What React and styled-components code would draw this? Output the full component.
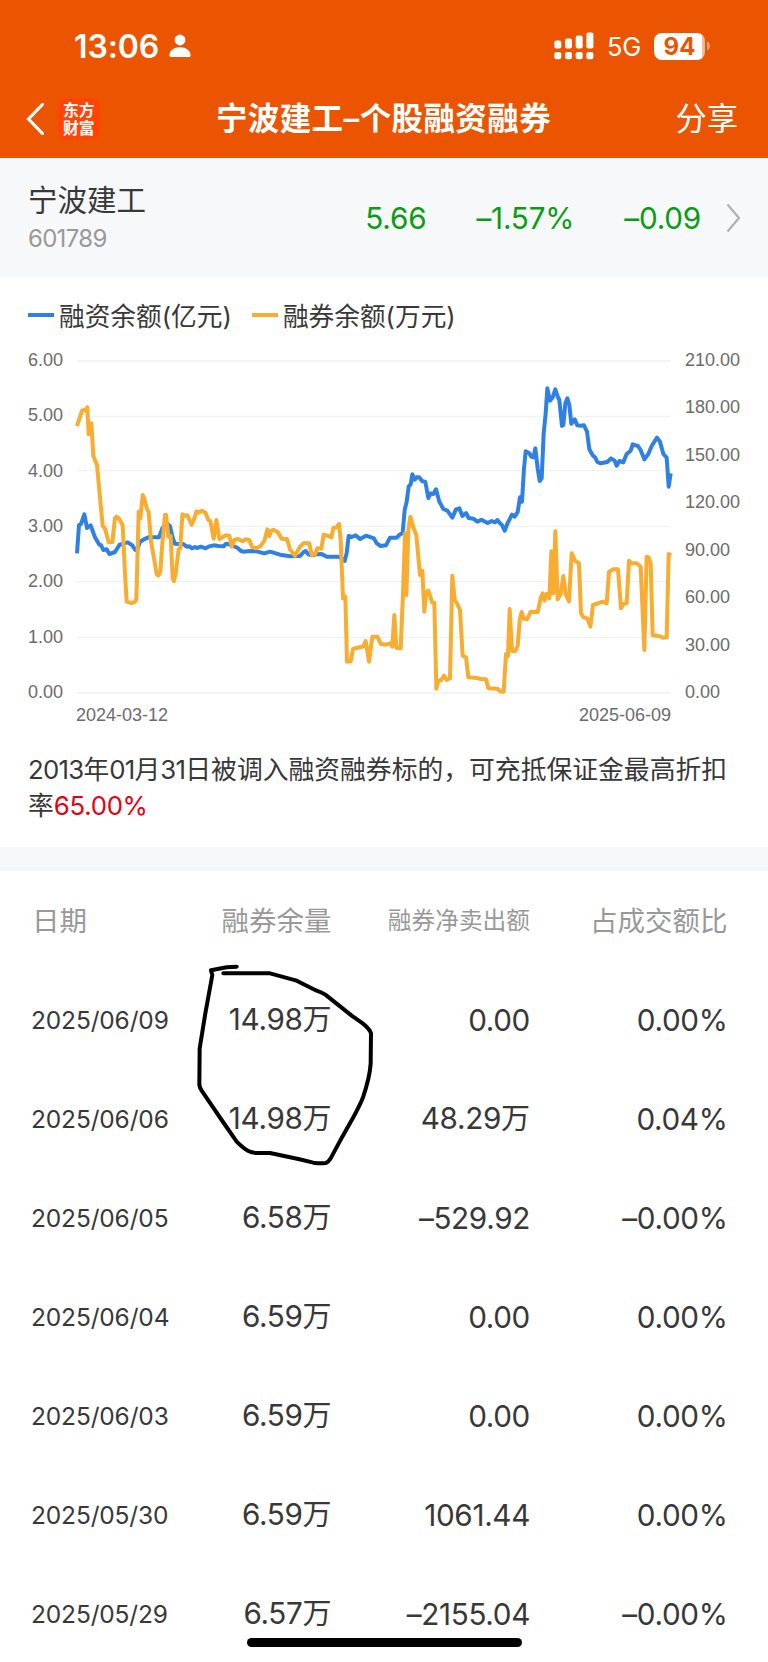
import React from "react";
import styled, { createGlobalStyle } from "styled-components";

const GlobalStyle = createGlobalStyle`
  * { box-sizing: border-box; }
  body {
    margin: 0;
    background: #fff;
    font-family: Inter, "Noto Sans CJK SC", sans-serif;
    color: #383838;
    font-weight: 400;
  }
`;

const Screen = styled.div`
  position: relative;
  width: 768px;
  height: 1662px;
  overflow: hidden;
  background: #fff;
`;

const Top = styled.header`
  height: 158px;
  background: #eb5502;
  color: #fff;
`;

const StatusBar = styled.div`
  display: flex;
  align-items: center;
  height: 92px;
  padding: 0 57px 0 74px;
`;

const Clock = styled.span`
  font-size: 32px;
  font-weight: 600;
  line-height: 40px;
  letter-spacing: -0.1px;
  margin-top: 1px;
  margin-right: 10px;
`;

const StatusRight = styled.div`
  display: flex;
  align-items: center;
  margin-left: auto;
`;

const Network = styled.span`
  font-size: 25.5px;
  line-height: 32px;
  margin: 2px 13px 0 13px;
  letter-spacing: -0.3px;
`;

const Battery = styled.span`
  display: flex;
  align-items: center;
  justify-content: center;
  width: 51px;
  height: 27px;
  border-radius: 8px;
  background: linear-gradient(90deg, #fff 48px, #f8bb9a 48px);
  color: #eb5502;
  font-size: 24px;
  font-weight: 700;
  line-height: 27px;
`;

const NavBar = styled.nav`
  display: grid;
  grid-template-columns: 184px 1fr 184px;
  align-items: center;
  height: 54px;
  padding: 0 30px 0 26px;
`;

const NavLeft = styled.div`
  display: flex;
  align-items: center;
  gap: 14px;
`;

const AppLogo = styled.div`
  width: 42px;
  height: 42px;
  padding: 3px 5px;
  border-radius: 9px;
  background: #ff4405;
  font-family: "Noto Sans CJK SC", sans-serif;
  font-size: 15.8px;
  font-weight: 700;
  line-height: 18px;
  word-break: break-all;
`;

const Title = styled.h1`
  margin: 0;
  padding-left: 3px;
  font-size: 31.5px;
  font-weight: 600;
  line-height: 40px;
  letter-spacing: 0.4px;
  white-space: nowrap;
  text-align: center;
`;

const Share = styled.span`
  font-size: 31.3px;
  line-height: 40px;
  text-align: right;
`;

const Quote = styled.section`
  display: flex;
  align-items: center;
  height: 119px;
  padding: 0 27px 0 28px;
  background: #f6f8fa;
`;

const StockName = styled.div`
  font-size: 29.5px;
  line-height: 36px;
`;

const StockCode = styled.div`
  margin-top: 6px;
  font-size: 24px;
  line-height: 30px;
  color: #999;
  letter-spacing: -0.7px;
`;

const Figures = styled.div`
  display: flex;
  gap: 50px;
  margin-left: auto;
  margin-right: 25px;
  font-size: 29.7px;
  line-height: 36px;
  color: #0a9c12;
  letter-spacing: -0.2px;
`;

const ChartCard = styled.section`
  height: 453px;
  padding-top: 20px;
`;

const Legend = styled.div`
  display: flex;
  align-items: center;
  height: 34px;
  padding-left: 28px;
  gap: 20px;
  font-size: 25.7px;
`;

const LegendItem = styled.span`
  display: flex;
  align-items: center;
  gap: 5px;
  white-space: nowrap;
  &::before {
    content: "";
    width: 26px;
    height: 4px;
    margin-top: 2px;
    background: ${(p) => p.$color};
  }
`;

const ChartBody = styled.div`
  display: grid;
  grid-template-columns: 42px 606px 1fr;
  padding: 19px 0 0 28px;
  font-family: "Liberation Sans", Arial, sans-serif;
  font-size: 18px;
  line-height: 20px;
  color: #6b6b6b;
`;

const Axis = styled.div`
  display: flex;
  flex-direction: column;
  justify-content: space-between;
  height: 352px;
  padding-left: ${(p) => p.$indent || 0}px;
`;

const Plot = styled.svg`
  display: block;
  width: 606px;
  height: 345px;
  margin-top: 5px;
`;

const Dates = styled.div`
  grid-column: 2;
  display: flex;
  justify-content: space-between;
  padding: 3px 5px 0 6px;
`;

const Notice = styled.p`
  margin: 0;
  height: 117px;
  padding: 22px 28px 0;
  font-size: 25.8px;
  line-height: 36px;
  white-space: nowrap;
`;

const Digits = styled.span`
  letter-spacing: -0.75px;
`;

const Rate = styled.span`
  color: #e60012;
  letter-spacing: -0.3px;
`;

const Divider = styled.div`
  height: 24px;
  background: #f6f8fa;
`;

const Table = styled.section`
  position: relative;
  padding-left: 31px;
`;

const Row = styled.div`
  display: grid;
  grid-template-columns: 160.5px 140px 198.5px 197.5px;
  align-items: center;
  height: 99px;
`;

const HeadCell = styled.span`
  font-size: ${(p) => (p.$small ? 23.7 : 27.5)}px;
  line-height: 36px;
  color: #999;
  padding-left: ${(p) => (p.$left ? 1 : 0)}px;
  text-align: ${(p) => (p.$left ? "left" : "right")};
  white-space: nowrap;
`;

const DateCell = styled.span`
  font-size: 24.5px;
  line-height: 36px;
  letter-spacing: -0.15px;
`;

const ValueCell = styled.span`
  font-size: 29.7px;
  line-height: 36px;
  text-align: right;
  letter-spacing: -0.35px;
  white-space: nowrap;
`;

const Unit = styled.span`
  font-size: 29px;
  letter-spacing: 0;
`;

const Scribble = styled.svg`
  position: absolute;
  left: 180px;
  top: 69px;
  width: 220px;
  height: 240px;
`;

const HomeIndicator = styled.div`
  position: absolute;
  left: 247px;
  bottom: 15px;
  width: 275px;
  height: 9px;
  border-radius: 5px;
  background: #000;
`;

const BALANCE = `231,790 237,705 243,702 253,673 261,714 272,706 285,742 298,764 303,765 310,780 320,778 328,792
345,786 358,765 372,760 383,757 397,766 406,780 413,776 420,755 430,749 445,742 477,742 487,715 500,700 510,708
516,735 524,761 540,762 550,762 560,770 568,769 576,775 585,771 591,774 603,770 617,775 628,769 641,766 655,768
671,769 678,761 690,764 700,768 713,774 723,783 730,785 750,783 770,784 793,790 810,785 840,794 870,799 900,798
910,787 917,783 925,793 935,796 950,793 965,792 980,800 1015,800 1025,805 1034,813 1040,790 1046,738 1055,741
1067,736 1080,747 1098,737 1122,745 1130,760 1142,768 1158,766 1170,743 1190,743 1198,735 1208,728 1214,660
1220,635 1226,590 1232,583 1237,553 1244,569 1250,562 1258,562 1266,573 1276,576 1285,624 1292,610 1300,612
1308,598 1318,635 1330,657 1342,662 1357,683 1368,658 1378,655 1387,678 1398,669 1406,684 1420,686 1432,695
1444,689 1463,699 1475,693 1485,697 1492,690 1500,700 1506,705 1514,722 1524,697 1536,674 1544,680 1553,666
1560,622 1566,635 1572,535 1577,484 1588,490 1594,500 1600,502 1606,475 1613,535 1619,573 1625,565 1631,430
1637,370 1642,295 1650,332 1658,322 1666,298 1673,320 1678,330 1686,408 1690,405 1696,340 1702,325 1708,345
1714,401 1724,388 1732,406 1740,407 1752,406 1761,425 1768,478 1778,496 1786,503 1792,516 1802,520 1822,516
1833,505 1844,512 1850,527 1858,513 1870,517 1880,492 1892,482 1898,463 1914,468 1922,480 1933,508 1945,492
1955,468 1971,443 1980,455 1990,492 2000,503 2006,590 2012,550`;

const LENDING = `231,408 246,362 252,360 256,362 262,352 266,433 272,430 274,400 280,498 291,525 308,708 315,716
326,757 337,756 345,684 350,680 358,687 368,706 375,850 380,935 394,939 402,937 409,930 416,665 421,685 428,615
433,625 440,655 446,666 453,755 463,810 470,852 475,857 481,845 487,760 495,674 498,674 505,740 512,738 518,865
522,873 527,850 536,778 541,775 547,673 552,677 562,676 575,704 583,686 589,664 597,668 606,662 617,669 625,690
631,693 641,746 649,690 658,747 665,743 677,736 688,737 695,770 703,750 714,747 728,754 736,748 748,750 756,770
768,775 782,768 794,750 802,718 808,738 814,722 820,719 832,725 845,746 861,747 870,778 885,797 900,770 910,760
928,760 935,795 945,793 952,775 964,776 971,734 982,737 994,742 1000,714 1010,712 1017,702 1022,750 1029,925
1036,920 1041,1115 1052,1114 1059,1077 1070,1074 1090,1069 1097,1053 1107,1115 1117,1040 1132,1040 1142,1061
1157,1064 1170,1060 1177,1070 1183,975 1189,1073 1202,1075 1209,910 1215,730 1219,915 1225,720 1231,680
1241,715 1249,735 1260,855 1267,842 1273,965 1279,905 1285,902 1297,938 1303,938 1309,1196 1315,1173 1324,1170
1332,1157 1340,1170 1350,1165 1357,857 1364,930 1370,938 1380,960 1388,1097 1398,1102 1405,1162 1432,1164
1445,1168 1458,1168 1465,1195 1492,1196 1500,1204 1511,1205 1518,1092 1524,1098 1529,957 1536,1083 1546,1083
1553,1068 1559,990 1565,966 1571,986 1582,987 1592,965 1613,966 1622,925 1628,910 1634,932 1640,912 1648,925
1654,784 1660,910 1666,724 1673,928 1682,912 1690,858 1697,912 1707,934 1715,790 1726,813 1737,820 1743,970
1750,982 1762,985 1771,1010 1779,945 1808,935 1820,940 1827,845 1840,838 1854,838 1863,955 1870,942 1880,940
1887,812 1894,820 1910,820 1922,830 1933,1080 1940,800 1946,802 1952,820 1958,1036 1976,1038 1989,1043
2000,1042 2006,792 2014,795`;

const GRID = [213, 379, 542, 709, 875, 1042, 1209];
const LEFT = ["6.00", "5.00", "4.00", "3.00", "2.00", "1.00", "0.00"];
const RIGHT = ["210.00", "180.00", "150.00", "120.00", "90.00", "60.00", "30.00", "0.00"];

const ROWS = [
  ["2025/06/09", "14.98万", "0.00", "0.00%"],
  ["2025/06/06", "14.98万", "48.29万", "0.04%"],
  ["2025/06/05", "6.58万", "–529.92", "–0.00%"],
  ["2025/06/04", "6.59万", "0.00", "0.00%"],
  ["2025/06/03", "6.59万", "0.00", "0.00%"],
  ["2025/05/30", "6.59万", "1061.44", "0.00%"],
  ["2025/05/29", "6.57万", "–2155.04", "–0.00%"],
];

const Value = ({ text }) => {
  const hasUnit = text.endsWith("万");
  return (
    <ValueCell>
      {hasUnit ? text.slice(0, -1) : text}
      {hasUnit && <Unit>万</Unit>}
    </ValueCell>
  );
};

const PersonIcon = () => (
  <svg width="22" height="24" viewBox="0 0 22 24" fill="#fff">
    <circle cx="11" cy="6" r="5.4" />
    <path d="M0.4 21.2C0.4 16.5 5 13.2 11 13.2s10.6 3.3 10.6 8c0 1.2-.6 1.8-1.8 1.8H2.2C1 23 .4 22.4 .4 21.2z" />
  </svg>
);

const SignalIcon = () => (
  <svg width="40" height="28" viewBox="0 0 40 28" fill="#fff">
    {[8, 6, 3, 0].map((y, i) => (
      <g key={y}>
        <rect x={i * 10.7 + 0.3} y={y + 0.5} width="7" height={16 - y} rx="2" />
        <rect x={i * 10.7 + 0.3} y="20" width="7" height="7.2" rx="2.2" />
      </g>
    ))}
  </svg>
);

export default function App() {
  return (
    <Screen>
      <GlobalStyle />
      <Top>
        <StatusBar>
          <Clock>13:06</Clock>
          <PersonIcon />
          <StatusRight>
            <SignalIcon />
            <Network>5G</Network>
            <Battery>94</Battery>
            <svg width="6" height="10" viewBox="0 0 6 10">
              <path d="M2 0.5C6 2 6 8 2 9.5z" fill="#f39d70" />
            </svg>
          </StatusRight>
        </StatusBar>
        <NavBar>
          <NavLeft>
            <svg width="18" height="32" viewBox="0 0 18 32" fill="none">
              <path d="M16.5 1.5L2.5 16L16.5 30.5" stroke="#fff" strokeWidth="3.2" strokeLinecap="round" />
            </svg>
            <AppLogo>东方财富</AppLogo>
          </NavLeft>
          <Title>宁波建工–个股融资融券</Title>
          <Share>分享</Share>
        </NavBar>
      </Top>

      <Quote>
        <div>
          <StockName>宁波建工</StockName>
          <StockCode>601789</StockCode>
        </div>
        <Figures>
          <span>5.66</span>
          <span>–1.57%</span>
          <span>–0.09</span>
        </Figures>
        <svg width="15" height="30" viewBox="0 0 15 30" fill="none">
          <path d="M1.5 1.5L13 15L1.5 28.5" stroke="#b0b0b0" strokeWidth="2.2" />
        </svg>
      </Quote>

      <ChartCard>
        <Legend>
          <LegendItem $color="#2f80e4">融资余额(亿元)</LegendItem>
          <LegendItem $color="#f8ac30">融券余额(万元)</LegendItem>
        </Legend>
        <ChartBody>
          <Axis>{LEFT.map((t) => <span key={t}>{t}</span>)}</Axis>
          <Plot viewBox="210 195 1818 1035" fill="none" strokeLinejoin="round">
            {GRID.map((y) => (
              <line key={y} x1="231" x2="2011" y1={y} y2={y} stroke="#f1f1f1" strokeWidth="4" />
            ))}
            <polyline points={BALANCE} stroke="#2f80e4" strokeWidth="12" />
            <polyline points={LENDING} stroke="#f8ac30" strokeWidth="12" />
          </Plot>
          <Axis $indent={9}>{RIGHT.map((t) => <span key={t}>{t}</span>)}</Axis>
          <Dates>
            <span>2024-03-12</span>
            <span>2025-06-09</span>
          </Dates>
        </ChartBody>
      </ChartCard>

      <Notice>
        <Digits>2013</Digits>年<Digits>01</Digits>月<Digits>31</Digits>日被调入融资融券标的，可充抵保证金最高折扣
        <br />
        率<Rate>65.00%</Rate>
      </Notice>
      <Divider />

      <Table>
        <Row>
          <HeadCell $left>日期</HeadCell>
          <HeadCell>融券余量</HeadCell>
          <HeadCell $small>融券净卖出额</HeadCell>
          <HeadCell>占成交额比</HeadCell>
        </Row>
        {ROWS.map(([date, ...values]) => (
          <Row key={date}>
            <DateCell>{date}</DateCell>
            {values.map((v, i) => <Value key={i} text={v} />)}
          </Row>
        ))}
        <Scribble viewBox="0 0 660 720" fill="none" stroke="#000" strokeWidth="12" strokeLinecap="round" strokeLinejoin="round">
          <path d="M170 80L140 82L93 91L97 105L76 220L59 325L58 435Q60 445 65 452L125 540L170 605Q190 625 205 633Q215 638 230 639H270L355 657L400 668Q420 671 437 669Q445 667 452 655L487 590L520 532Q540 495 548 475Q570 410 572 370L573 280Q570 268 548 250L515 227L436 164Q425 157 410 152L350 122L270 100H130" />
        </Scribble>
      </Table>
      <HomeIndicator />
    </Screen>
  );
}
